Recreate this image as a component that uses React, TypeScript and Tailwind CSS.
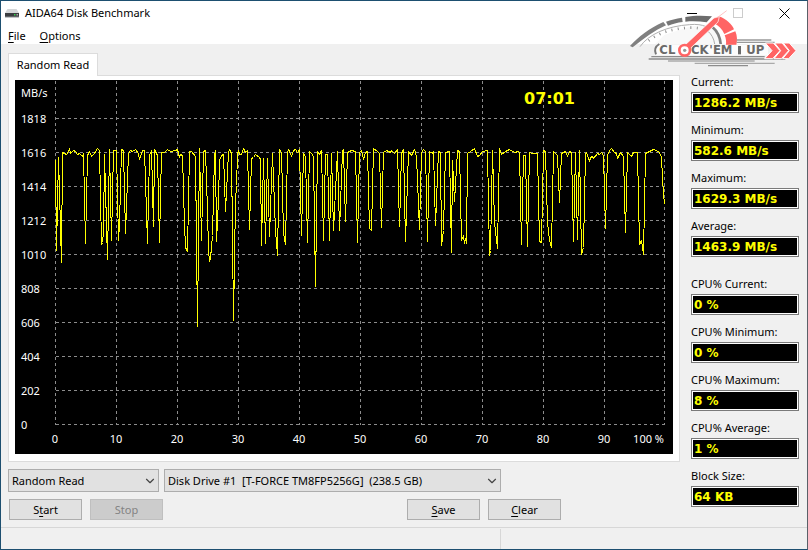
import { ChevronDown } from "lucide-react";

const samples = `
55,160 56,250 58,157 61,262 62,152 64,153 66,154 68,151 69,148 70,153 73,150 75,151 77,154 79,153 82,156 83,153
85,243 87,155 89,151 91,156 94,153 97,148 99,150 101,244 102,242 103,232 104,154 107,259 109,149 111,240 113,150
116,150 118,240 119,224 121,149 123,150 125,233 128,153 130,150 132,151 135,149 138,153 139,159 142,150 144,150
147,243 149,155 151,150 153,226 154,149 157,155 159,242 161,152 164,152 167,149 170,151 175,150 177,149 179,157
180,154 182,155 184,224 185,247 187,251 189,151 191,151 195,156 197,326 199,148 201,240 203,151 205,150 207,210
208,250 209,261 210,258 212,235 214,155 215,150 216,241 218,200 219,160 221,155 223,154 225,211 227,172 228,152
229,149 231,153 233,320 235,200 236,185 237,154 238,150 239,154 241,154 243,148 245,152 247,150 249,229 251,158
253,157 255,154 259,157 260,159 261,245 263,158 265,243 267,158 269,236 272,153 275,230 277,255 279,149 281,152
283,232 285,244 287,152 288,149 289,151 291,156 293,150 295,149 297,152 299,149 301,235 303,153 305,156 307,242
309,151 312,154 313,157 315,286 317,151 319,154 321,150 323,240 325,154 327,154 329,240 331,153 333,230 337,151
339,230 342,151 343,149 345,221 347,152 351,150 355,151 357,242 359,152 361,150 363,159 365,152 367,151 369,228
371,230 373,148 377,151 379,153 381,227 383,152 386,150 390,152 391,150 394,153 397,149 399,226 401,153 403,149
405,241 408,151 411,155 414,149 416,156 419,229 421,152 423,149 425,151 427,241 429,151 432,153 433,151 435,225
438,151 440,152 441,245 443,230 445,152 449,151 451,252 452,160 454,201 457,150 459,151 461,240 463,235 464,243
465,238 466,243 467,153 470,151 474,148 477,156 479,155 482,151 487,150 489,255 490,250 492,150 494,222 497,248
499,148 501,154 505,151 509,149 514,152 518,151 519,152 521,244 523,155 525,155 527,246 529,152 532,153 537,153
539,241 541,242 543,150 545,151 547,222 549,240 551,247 553,151 555,153 557,155 559,202 561,153 565,151 567,156
569,151 571,152 573,241 575,152 577,239 579,150 581,254 583,247 585,153 586,152 589,161 590,157 592,156 593,158
597,153 599,154 601,152 603,155 605,228 607,155 609,150 611,148 614,152 616,153 617,158 620,152 623,156 625,232
627,152 631,156 633,152 637,152 639,244 641,240 643,254 645,153 649,151 653,149 658,151 661,156 662,178 663,192
664,204`;

const speeds = [1818, 1616, 1414, 1212, 1010, 808, 606, 404, 202, 0];
const columns = [55, 116, 177, 238, 299, 360, 421, 482, 543, 604, 664];

const stats = [
  { id: "current", label: "Current:", value: "1286.2 MB/s" },
  { id: "minimum", label: "Minimum:", value: "582.6 MB/s" },
  { id: "maximum", label: "Maximum:", value: "1629.3 MB/s" },
  { id: "average", label: "Average:", value: "1463.9 MB/s" },
];

const cpuStats = [
  { id: "cpu-current", label: "CPU% Current:", value: "0 %" },
  { id: "cpu-minimum", label: "CPU% Minimum:", value: "0 %" },
  { id: "cpu-maximum", label: "CPU% Maximum:", value: "8 %" },
  { id: "cpu-average", label: "CPU% Average:", value: "1 %" },
  { id: "block-size", label: "Block Size:", value: "64 KB" },
];

function DriveIcon() {
  return (
    <svg width="14" height="9" viewBox="0 0 14 9" aria-hidden="true">
      <path d="M2.5 0h9L14 4H0z" fill="#d4d6d8" />
      <path d="M0 4h14v4H0z" fill="#3b3d40" />
      <path d="M0 7.5h14v1H0z" fill="#85888c" />
      <path d="M9 5h1.5v1.5H9z" fill="#35d04a" />
      <path d="M11.5 5H13v1.5h-1.5z" fill="#aaa" />
    </svg>
  );
}

// Gauge with the team name across it, laid over the window corner
function Logo() {
  return (
    <svg
      className="pointer-events-none absolute top-[7px] right-[7px] h-[62px] w-[172px]"
      viewBox="0 0 516 186"
      role="img"
      aria-label="Clock'Em Up"
    >
      <path d="M82 108L110 80 190 55 250 50 285 108z" fill="#f8f8f8" />
      <path d="M6 114C32 86 62 62 106 42l8 10C80 68 48 90 14 118z" fill="#808080" />
      <path d="M114 41c14-6 30-9 48-12l2 13c-16 2-31 6-44 11z" fill="#777" />
      <path d="M172 27c26-5 54-5 80-2l-16 18c-20-3-42-4-64-2z" fill="#6c6c6c" />
      <path d="M36 116C62 78 120 54 184 50c22-2 38 0 50 6" fill="none" stroke="#b0b0b0" strokeWidth="3" />
      <path
        d="M62 98C96 72 140 60 190 59c16 0 28 2 38 6"
        fill="none"
        stroke="#8c8c8c"
        strokeWidth="8"
        strokeDasharray="3 16"
      />
      <path d="M254 58c14 12 22 28 24 50" fill="none" stroke="#808080" strokeWidth="8" />
      <path d="M240 70c10 8 18 22 20 38" fill="none" stroke="#aaa" strokeWidth="3" />
      <path d="M262 30l10-5c24 8 40 24 46 39l-29 14c-6-14-18-26-32-32z" fill="#ff6464" />
      <path d="M290 82l32-12c6 14 6 28 3 41h-31c1-10 0-20-4-29z" fill="#ff6464" />
      <path d="M326 96h104M326 103h114" stroke="#999" strokeWidth="4" />
      <path d="M88 110h332v32H80z" fill="#fff" opacity=".8" />
      <path d="M94 108c-13 8-15 20-10 31" fill="none" stroke="#777" strokeWidth="6" />
      <g stroke="#8c8c8c" strokeWidth="4">
        <path d="M62 153h410M70 146h340" />
        <path d="M120 159h260M200 166h240" stroke="#aaa" />
        <path d="M240 173h120" />
      </g>
      <g fill="#6a6a6a" fontSize="35" fontWeight="700" fontFamily='"DejaVu Sans", sans-serif'>
        <text x="94" y="139">
          CL
        </text>
        <text x="189" y="139">
          CK
        </text>
        <text x="244" y="139">
          &apos;EM
        </text>
        <text x="355" y="139">
          UP
        </text>
      </g>
      <path d="M330 114h9v25h-9z" fill="#6a6a6a" />
      <path d="M166 116L258 30l16-4-4 16-88 84z" fill="#ff6464" stroke="#fff" strokeWidth="2" />
      <path d="M272 26l24-18" stroke="#ffc4c4" strokeWidth="3" />
      <circle cx="170" cy="127" r="16" fill="#fff" stroke="#ff6464" strokeWidth="8" />
      <circle cx="170" cy="127" r="5" fill="#999" />
      <g fill="#ff6464" stroke="#fff" strokeWidth="3">
        <path d="M412 105h24l20 23-22 24h-24l22-24z" />
        <path d="M440 105h22l20 23-22 24h-22l20-24z" />
        <path d="M466 105h18l20 23-22 24h-18l20-24z" />
      </g>
    </svg>
  );
}

function Chart() {
  return (
    <svg viewBox="15 80 658 374" className="block h-auto w-full bg-black" role="img" aria-label="Random read speed">
      <g transform="translate(.5 .5)" stroke="#8c8c8c" strokeDasharray="3 3" shapeRendering="crispEdges">
        {columns.map((x) => (
          <line key={x} x1={x} y1={80} x2={x} y2={424} />
        ))}
        {speeds.map((speed, i) => (
          <line key={speed} x1={55} y1={118 + i * 34} x2={664} y2={118 + i * 34} />
        ))}
      </g>
      <polyline
        points={samples}
        transform="translate(.5 .5)"
        fill="none"
        stroke="#ff0"
        strokeLinejoin="bevel"
        shapeRendering="crispEdges"
      />
      <g fill="#fff" fontSize="11">
        <text x={21} y={97}>
          MB/s
        </text>
        {speeds.map((speed, i) => (
          <text key={speed} x={21} y={123 + i * 34}>
            {speed}
          </text>
        ))}
        {columns.map((x, i) => (
          <text key={x} x={x} y={443} textAnchor={i === 10 ? "end" : "middle"}>
            {i === 10 ? "100 %" : i * 10}
          </text>
        ))}
      </g>
      <text x={524} y={104} fill="#ff0" fontSize="16" fontWeight="700" fontFamily='"DejaVu Sans", sans-serif'>
        07:01
      </text>
    </svg>
  );
}

function Stat({ id, label, value }: { id: string; label: string; value: string }) {
  return (
    <div className="flex flex-col gap-0.5">
      <label htmlFor={id} className="h-[19px] leading-[22px] whitespace-nowrap">
        {label}
      </label>
      <input
        id={id}
        readOnly
        value={value}
        className="h-[21px] w-full border border-[#7a7a7a] bg-black pl-0.5 font-['DejaVu_Sans',sans-serif] text-[12px] leading-[17px] font-bold text-[#ff0] outline-1 -outline-offset-2 outline-white"
      />
    </div>
  );
}

function Dropdown({ label, value, width }: { label: string; value: string; width: string }) {
  return (
    <div className={`relative ${width}`}>
      <select
        aria-label={label}
        className="h-[23px] w-full appearance-none border border-[#adadad] bg-[#e1e1e1] pr-5 pl-[3px] leading-[20px] whitespace-pre"
      >
        <option>{value}</option>
      </select>
      <ChevronDown
        className="pointer-events-none absolute top-[5px] right-[2px] text-[#444]"
        size={14}
        strokeWidth={2}
        aria-hidden="true"
      />
    </div>
  );
}

const buttonClass = "h-[21px] w-[73px] border border-[#adadad] bg-[#e1e1e1] leading-[19px]";

export default function App() {
  return (
    <div className="relative flex min-h-screen flex-col border border-[#1d4f70] border-r-[#5a6068] bg-[#f0f0f0] font-['Noto_Sans','Open_Sans',sans-serif] text-[11px] text-black">
      <header className="bg-white">
        <div className="flex h-6 items-center">
          <div className="flex flex-1 items-center gap-[6px] pl-1">
            <DriveIcon />
            <h1>AIDA64 Disk Benchmark</h1>
          </div>
          <button aria-label="Minimize" className="flex h-6 w-[46px] items-center justify-center">
            <svg width="11" height="11" shapeRendering="crispEdges">
              <path d="M0 5.5h10" stroke="#000" />
            </svg>
          </button>
          <button aria-label="Maximize" disabled className="flex h-6 w-[46px] items-center justify-center">
            <svg width="11" height="11" fill="none" shapeRendering="crispEdges">
              <path d="M.5.5h9v9h-9z" stroke="#ccc" />
            </svg>
          </button>
          <button aria-label="Close" className="flex h-6 w-[46px] items-center justify-center">
            <svg width="11" height="11">
              <path d="M.5.5l10 10m0-10l-10 10" stroke="#000" />
            </svg>
          </button>
        </div>
        <nav className="flex h-[19px] gap-[14px] pl-[7px] leading-[22px]">
          <button>
            <u className="underline-offset-2">F</u>ile
          </button>
          <button>
            <u className="underline-offset-2">O</u>ptions
          </button>
        </nav>
      </header>

      <main className="flex flex-1 items-start gap-[11px] pt-[9px] pr-2 pl-[7px]">
        <div className="min-w-0 flex-1">
          <button className="relative block h-[23px] w-[90px] border border-b-0 border-[#dcdcdc] bg-white text-center leading-[20px]">
            Random Read
          </button>
          <div className="-mt-px border border-[#dcdcdc] bg-white px-[6px] pt-1 pb-[7px]">
            <Chart />
          </div>
          <div className="mt-[7px] flex gap-[5px]">
            <Dropdown label="Test" value="Random Read" width="w-[151px]" />
            <Dropdown
              label="Drive"
              value={"Disk Drive #1\u00a0 [T-FORCE TM8FP5256G]\u00a0 (238.5 GB)"}
              width="w-[337px]"
            />
          </div>
          <div className="mt-[7px] flex gap-2 pl-px">
            <button className={buttonClass}>
              S<u className="underline-offset-2">t</u>art
            </button>
            <button disabled className="h-[21px] w-[73px] border border-[#bfbfbf] bg-[#ccc] leading-[19px] text-[#838383]">
              Stop
            </button>
            <div className="ml-[236px] flex gap-2">
              <button className={buttonClass}>
                <u className="underline-offset-2">S</u>ave
              </button>
              <button className={buttonClass}>
                <u className="underline-offset-2">C</u>lear
              </button>
            </div>
          </div>
        </div>

        <aside className="flex w-[108px] flex-col gap-4 pt-[18px]">
          <div className="flex flex-col gap-[6px]">
            {stats.map((stat) => (
              <Stat key={stat.id} {...stat} />
            ))}
          </div>
          <div className="flex flex-col gap-[6px]">
            {cpuStats.map((stat) => (
              <Stat key={stat.id} {...stat} />
            ))}
          </div>
        </aside>
      </main>

      <footer className="flex h-[22px] border-t border-[#d7d7d7] pt-px">
        <div className="w-[500px] border-r border-[#d7d7d7]" />
      </footer>
      <Logo />
    </div>
  );
}
